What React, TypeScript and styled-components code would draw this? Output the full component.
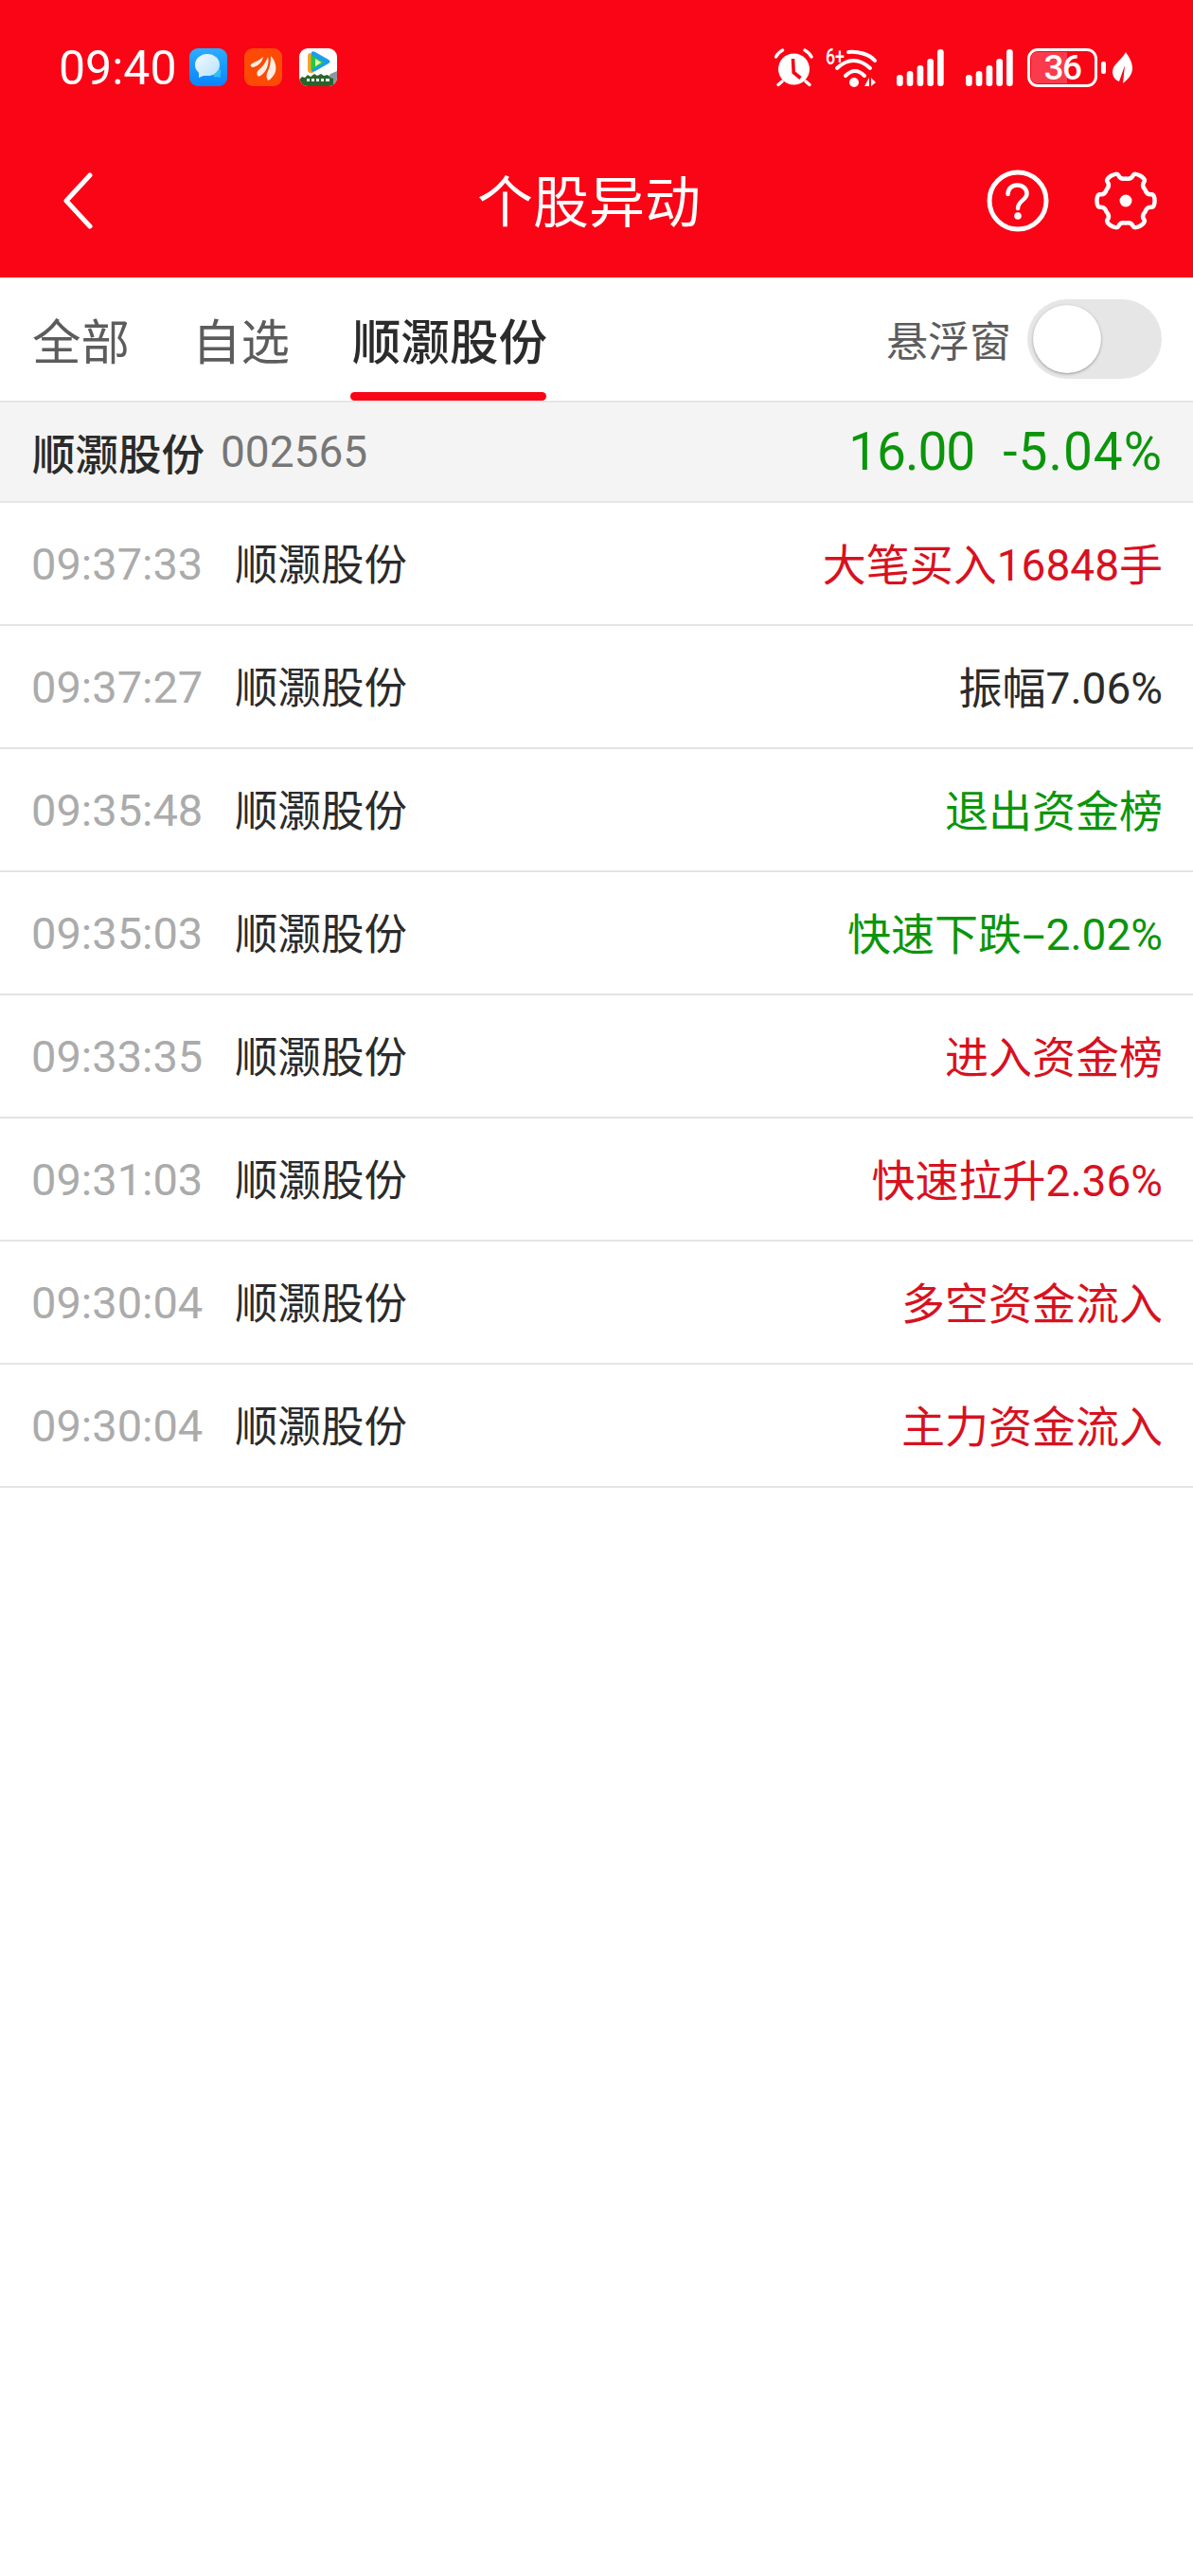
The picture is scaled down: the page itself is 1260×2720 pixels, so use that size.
import React from 'react';
import styled, { createGlobalStyle } from 'styled-components';

const FONT = '"Noto Sans CJK SC", "Noto Sans", sans-serif';
const DIGITS = '"Roboto", "Noto Sans CJK SC", sans-serif';

const GlobalStyle = createGlobalStyle`
  html, body {
    margin: 0;
    padding: 0;
    background: #fff;
    font-family: ${FONT};
  }
`;

const Page = styled.div`
  width: 1260px;
  height: 2720px;
  background: #fff;
  overflow: hidden;
`;

const Header = styled.header`
  height: 293px;
  background: #f90516;
  color: #fff;
  display: flex;
  flex-direction: column;
`;

const StatusBar = styled.div`
  height: 130px;
  padding: 12px 64px 0 62px;
  display: flex;
  align-items: center;
  justify-content: space-between;
  box-sizing: border-box;
`;

const StatusLeft = styled.div`
  display: flex;
  align-items: center;
  gap: 8px;
`;

const Clock = styled.span`
  font-family: ${DIGITS};
  font-size: 50px;
  line-height: 60px;
  width: 130px;
  margin-top: 2px;
`;

const AppIcons = styled.div`
  display: flex;
  gap: 18px;
`;

const StatusRight = styled.div`
  display: flex;
  align-items: center;
`;

const StatusSlot = styled.span<{ $gap: number }>`
  display: flex;
  margin-right: ${p => p.$gap}px;
`;

const NavBar = styled.div`
  height: 163px;
  padding: 0 38px 0 67px;
  display: grid;
  grid-template-columns: 437px 1fr auto;
  align-items: center;
  box-sizing: border-box;
`;

const Title = styled.h1`
  margin: 0 0 3px;
  font-size: 59px;
  line-height: 72px;
  font-weight: 400;
`;

const NavActions = styled.div`
  display: flex;
  align-items: center;
  gap: 48px;
`;

const TabBar = styled.div`
  height: 132px;
  box-sizing: border-box;
  padding: 0 33px 0 34px;
  display: flex;
  align-items: stretch;
  justify-content: space-between;
  border-bottom: 2px solid #e6e6e6;
`;

const Tabs = styled.div`
  display: flex;
  gap: 66px;
`;

const Tab = styled.div<{ $active?: boolean }>`
  position: relative;
  font-size: 51.5px;
  line-height: 130px;
  height: 130px;
  color: ${p => (p.$active ? '#2b2b2b' : '#5c5c5c')};
  font-weight: ${p => (p.$active ? 500 : 400)};
  &::after {
    content: '';
    display: ${p => (p.$active ? 'block' : 'none')};
    position: absolute;
    left: -2px;
    right: 1px;
    bottom: 0;
    height: 9px;
    border-radius: 5px;
    background: #f90516;
  }
`;

const FloatOption = styled.div`
  display: flex;
  align-items: center;
  gap: 17px;
`;

const FloatLabel = styled.span`
  font-size: 44px;
  color: #5c5c5c;
`;

const Toggle = styled.div`
  width: 142px;
  height: 84px;
  border-radius: 42px;
  background: #e6e6e6;
  box-sizing: border-box;
  padding: 6px;
`;

const Knob = styled.div`
  width: 72px;
  height: 72px;
  border-radius: 50%;
  background: #fff;
  box-shadow: 0 1px 3px rgba(0, 0, 0, 0.35);
`;

const Summary = styled.div`
  height: 106px;
  box-sizing: border-box;
  padding: 0 32px 0 34px;
  background: #f4f4f4;
  border-bottom: 2px solid #e6e6e6;
  display: flex;
  align-items: center;
  justify-content: space-between;
`;

const StockInfo = styled.div`
  display: flex;
  align-items: center;
  gap: 17px;
`;

const StockName = styled.span`
  font-size: 45.5px;
  color: #2b2b2b;
  font-weight: 500;
`;

const StockCode = styled.span`
  font-family: ${DIGITS};
  font-size: 46px;
  color: #777;
`;

const Quote = styled.div`
  display: flex;
  gap: 30px;
  font-family: ${DIGITS};
  font-size: 55px;
  color: #0b950b;
`;

const QuotePrice = styled.span`
  letter-spacing: -1px;
`;

const QuoteChange = styled.span`
  letter-spacing: 1px;
`;

const Row = styled.div`
  height: 130px;
  box-sizing: border-box;
  padding: 0 32px 0 33px;
  border-bottom: 2px solid #e4e4e4;
  display: flex;
  align-items: center;
`;

const Time = styled.span`
  font-family: ${DIGITS};
  font-size: 47px;
  color: #ababab;
  width: 215px;
`;

const Name = styled.span`
  font-size: 45.5px;
  color: #2b2b2b;
  margin-bottom: 4px;
`;

const EventText = styled.span<{ $tone: 'up' | 'down' | 'flat' }>`
  margin-left: auto;
  margin-bottom: 4px;
  font-size: 46px;
  font-family: ${DIGITS};
  color: ${p => (p.$tone === 'up' ? '#d8111f' : p.$tone === 'down' ? '#0b950b' : '#2b2b2b')};
`;

const Dash = styled.span`
  display: inline-block;
  padding: 0 0.14em;
  transform: scaleX(1.9);
`;

type Tone = 'up' | 'down' | 'flat';

const EVENTS: { time: string; text: string; tone: Tone }[] = [
  { time: '09:37:33', text: '大笔买入16848手', tone: 'up' },
  { time: '09:37:27', text: '振幅7.06%', tone: 'flat' },
  { time: '09:35:48', text: '退出资金榜', tone: 'down' },
  { time: '09:35:03', text: '快速下跌-2.02%', tone: 'down' },
  { time: '09:33:35', text: '进入资金榜', tone: 'up' },
  { time: '09:31:03', text: '快速拉升2.36%', tone: 'up' },
  { time: '09:30:04', text: '多空资金流入', tone: 'up' },
  { time: '09:30:04', text: '主力资金流入', tone: 'up' },
];

const MessageIcon = () => (
  <svg width="40" height="40" viewBox="0 0 40 40">
    <defs>
      <linearGradient id="msgBg" x1="0" y1="0" x2="0" y2="1">
        <stop offset="0" stopColor="#2aaeff" />
        <stop offset="1" stopColor="#0a84ff" />
      </linearGradient>
      <linearGradient id="msgBubble" x1="0" y1="0" x2="1" y2="1">
        <stop offset="0" stopColor="#f2faff" />
        <stop offset="1" stopColor="#b9e2fa" />
      </linearGradient>
    </defs>
    <rect width="40" height="40" rx="9" fill="url(#msgBg)" />
    <path d="M25 27c3 0 5-2 6-6 2 1 3 3 2 6-1 2 0 3 0 4l-4-1c-2 1-4 0-4-3z" fill="#2cc0ee" />
    <ellipse cx="19" cy="17.5" rx="13" ry="11.5" fill="url(#msgBubble)" />
    <path d="M10 25v6l7-3z" fill="#d6eefc" />
  </svg>
);

const FeatherIcon = () => (
  <svg width="40" height="40" viewBox="0 0 40 40">
    <rect width="40" height="40" rx="9" fill="#fd4a05" />
    <path d="M7 17c4-3 9-4 13-8-1 5-5 10-11 11-1 0-3-1-2-3z" fill="#fdeee2" />
    <path d="M14 29c-1-2-1-4 1-6 4-3 7-7 10-14 2 7-2 17-8 20-1 1-2 1-3 0z" fill="#fdeee2" />
    <path d="M25 34c-2-3-2-6 0-10 2-4 3-9 3-16 5 5 7 13 4 19-2 3-4 6-7 7z" fill="#fdeee2" />
  </svg>
);

const VideoIcon = () => (
  <svg width="40" height="40" viewBox="0 0 40 40">
    <defs>
      <clipPath id="videoClip">
        <rect width="40" height="40" rx="9" />
      </clipPath>
    </defs>
    <g clipPath="url(#videoClip)">
      <rect width="40" height="40" fill="#fff" />
      <rect x="9" y="5" width="7" height="21" rx="3" fill="#f7a326" />
      <path d="M13 4c1-1 2-1 4 0l14 8c2 1 2 3 0 4l-14 8c-2 1-3 1-4 0z" fill="#1a9cf0" />
      <path d="M12.5 7l14 8-14 8z" fill="#27c840" />
      <path d="M17 11l6.5 4-6.5 4z" fill="#e6f8a8" />
      <path d="M30 31l3-4 7-3v16H30z" fill="#8a979b" />
      <path d="M0 33l3-3 3 1 3-3 3 2 4-3 3 2 4-2 3 2 4-1 3 3 3 1v11H0z" fill="#2a642c" />
      <path d="M8 32h3v3H8zM13 32h3v3h-3zM18 32h3v3h-3zM23 32h3v3h-3zM28 32h4v3h-4z" fill="#f1f5ee" />
    </g>
  </svg>
);

const AlarmIcon = () => (
  <svg width="41" height="41" viewBox="0 0 41 41">
    <circle cx="20.5" cy="22" r="16.5" fill="#fff" />
    <path d="M19.5 11l.7 14.5 7.3 6" fill="none" stroke="#f90516" strokeWidth="3.6" />
    <path d="M1.5 9c1.6-3 4-5.500 7-7M32 2c3 1.500 5.400 4 7 7M4 38.500l4-3.500M37 38.500l-4-3.500" fill="none" stroke="#fff" strokeWidth="3.4" strokeLinecap="round" />
  </svg>
);

const WifiIcon = () => (
  <svg width="54" height="41" viewBox="0 0 54 41" overflow="visible">
    <path d="M24 4c10-1 22 2 28 9M12 21Q29.500 5 47 21M21 29Q31 19 41 29" fill="none" stroke="#fff" strokeWidth="4" strokeLinecap="round" />
    <circle cx="30" cy="36" r="5" fill="#fff" />
    <path d="M46 31v9h-5zM48 31v9l5-4z" fill="#fff" />
    <text x="0" y="17" fill="#fff" fontSize="24" fontWeight="500" textLength="20" lengthAdjust="spacingAndGlyphs" fontFamily="Roboto, sans-serif">6+</text>
  </svg>
);

const SignalIcon = () => (
  <svg width="50" height="39" viewBox="0 0 50 39">
    {[
      [0, 27],
      [10.7, 23],
      [21.6, 17],
      [32.3, 10],
      [43, 0],
    ].map(([x, y]) => (
      <rect key={x} x={x} y={y} width="6.7" height={39 - y} rx="3.3" fill="#fff" />
    ))}
  </svg>
);

const BatteryWrap = styled.div`
  position: relative;
  width: 74px;
  height: 41px;
  box-sizing: border-box;
  border: 3px solid #fff;
  border-radius: 11px;
  overflow: hidden;
  display: flex;
  align-items: center;
  justify-content: center;
`;

const BatteryFill = styled.div`
  position: absolute;
  left: 1px;
  top: 1px;
  bottom: 1px;
  width: 38px;
  border-radius: 6px 0 0 6px;
  background: #fb3b4b;
`;

const BatteryText = styled.span`
  position: relative;
  font-family: ${DIGITS};
  font-size: 37px;
  font-weight: 500;
  letter-spacing: -1.5px;
  line-height: 35px;
`;

const BatteryCap = styled.div`
  width: 5px;
  height: 13px;
  border-radius: 2px;
  background: #fff;
  margin: 0 7px 0 4px;
`;

const LeafIcon = () => (
  <svg width="21" height="33" viewBox="0 0 21 33">
    <path d="M14 0c4 6 7 11 7 17 0 7-5 12-10 16l2-19-6 17c-5-2-7-6-7-10C0 13 9 9 14 0z" fill="#fff" />
  </svg>
);

const BackIcon = () => (
  <svg width="32" height="60" viewBox="0 0 32 60">
    <path d="M28 3L3 30l25 27" fill="none" stroke="#fff" strokeWidth="5" strokeLinecap="round" strokeLinejoin="round" />
  </svg>
);

const HelpIcon = () => (
  <svg width="66" height="66" viewBox="0 0 66 66">
    <circle cx="33" cy="33" r="30" fill="none" stroke="#fff" strokeWidth="5" />
    <path d="M22.500 26c0-6 4.500-9.500 10-9.500s10 3.500 10 9c0 6.500-9.500 7.500-9.500 15.500" fill="none" stroke="#fff" strokeWidth="4.500" strokeLinecap="round" />
    <circle cx="33" cy="49" r="3.800" fill="#fff" />
  </svg>
);

const polar = (deg: number, r: number) => {
  const rad = (deg * Math.PI) / 180;
  return `${(33 + r * Math.cos(rad)).toFixed(2)} ${(33 + r * Math.sin(rad)).toFixed(2)}`;
};

// six narrow rounded teeth, one pointing right, with hollow valleys between them
const GEAR_PATH =
  `M${polar(-30, 23.5)}` +
  [0, 60, 120, 180, 240, 300]
    .map(
      a =>
        `C${polar(a - 22, 23)} ${polar(a - 15, 24)} ${polar(a - 14, 28)}` +
        `C${polar(a - 13, 32.5)} ${polar(a + 13, 32.5)} ${polar(a + 14, 28)}` +
        `C${polar(a + 15, 24)} ${polar(a + 22, 23)} ${polar(a + 30, 23.5)}`,
    )
    .join('') +
  'Z';

const GearIcon = () => (
  <svg width="66" height="66" viewBox="0 0 66 66">
    <path d={GEAR_PATH} fill="none" stroke="#fff" strokeWidth="4.500" strokeLinejoin="round" />
    <circle cx="33" cy="33" r="6.500" fill="#fff" />
  </svg>
);

const withDash = (text: string) => {
  const at = text.indexOf('-');
  if (at < 0) return text;
  return (
    <>
      {text.slice(0, at)}
      <Dash>-</Dash>
      {text.slice(at + 1)}
    </>
  );
};

export default function App() {
  return (
    <Page>
      <GlobalStyle />
      <Header>
        <StatusBar>
          <StatusLeft>
            <Clock>09:40</Clock>
            <AppIcons>
              <MessageIcon />
              <FeatherIcon />
              <VideoIcon />
            </AppIcons>
          </StatusLeft>
          <StatusRight>
            <StatusSlot $gap={13}>
              <AlarmIcon />
            </StatusSlot>
            <StatusSlot $gap={21}>
              <WifiIcon />
            </StatusSlot>
            <StatusSlot $gap={23}>
              <SignalIcon />
            </StatusSlot>
            <StatusSlot $gap={15}>
              <SignalIcon />
            </StatusSlot>
            <BatteryWrap>
              <BatteryFill />
              <BatteryText>36</BatteryText>
            </BatteryWrap>
            <BatteryCap />
            <LeafIcon />
          </StatusRight>
        </StatusBar>
        <NavBar>
          <BackIcon />
          <Title>个股异动</Title>
          <NavActions>
            <HelpIcon />
            <GearIcon />
          </NavActions>
        </NavBar>
      </Header>
      <TabBar>
        <Tabs>
          <Tab>全部</Tab>
          <Tab>自选</Tab>
          <Tab $active>顺灏股份</Tab>
        </Tabs>
        <FloatOption>
          <FloatLabel>悬浮窗</FloatLabel>
          <Toggle>
            <Knob />
          </Toggle>
        </FloatOption>
      </TabBar>
      <Summary>
        <StockInfo>
          <StockName>顺灏股份</StockName>
          <StockCode>002565</StockCode>
        </StockInfo>
        <Quote>
          <QuotePrice>16.00</QuotePrice>
          <QuoteChange>-5.04%</QuoteChange>
        </Quote>
      </Summary>
      {EVENTS.map((e, i) => (
        <Row key={i}>
          <Time>{e.time}</Time>
          <Name>顺灏股份</Name>
          <EventText $tone={e.tone}>{withDash(e.text)}</EventText>
        </Row>
      ))}
    </Page>
  );
}
